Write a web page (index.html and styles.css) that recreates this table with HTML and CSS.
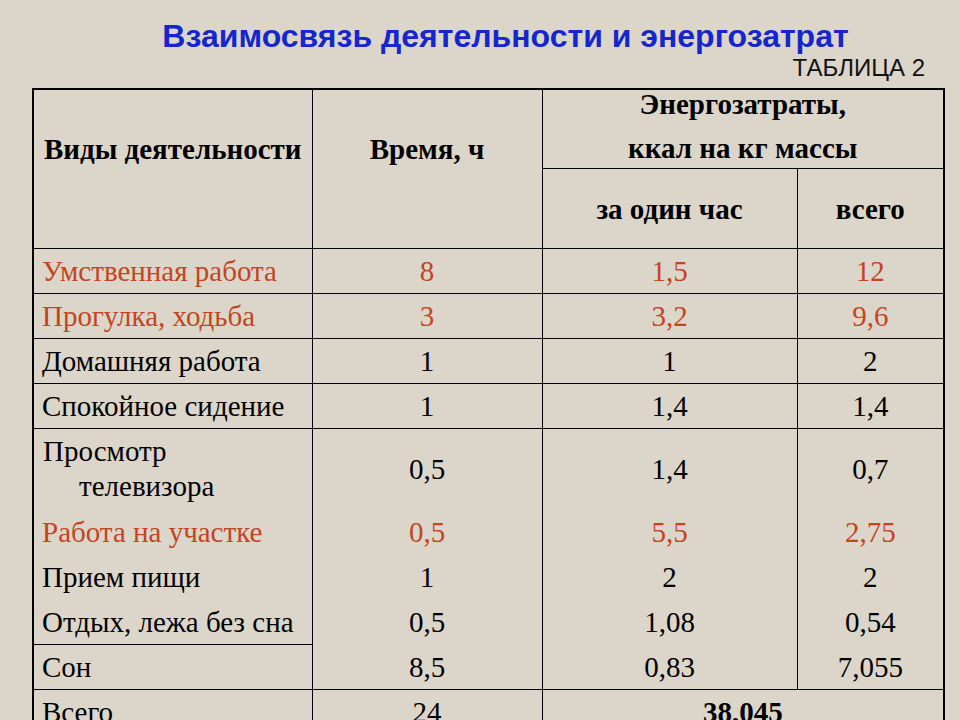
FILE: index.html
```html
<!DOCTYPE html>
<html lang="ru">
<head>
<meta charset="utf-8">
<title>Взаимосвязь деятельности и энергозатрат</title>
<link rel="stylesheet" href="styles.css">
</head>
<body>
<div class="page">
  <h1 class="title">Взаимосвязь деятельности и энергозатрат</h1>
  <div class="caption">ТАБЛИЦА 2</div>
  <table class="grid">
    <colgroup>
      <col class="c1"><col class="c2"><col class="c3"><col class="c4">
    </colgroup>
    <tr class="h1">
      <th rowspan="2" class="side">Виды деятельности</th>
      <th rowspan="2" class="side">Время, ч</th>
      <th colspan="2" class="energy"><div class="energy-in">Энергозатраты,<br>ккал на кг массы</div></th>
    </tr>
    <tr class="h2">
      <th>за один час</th>
      <th>всего</th>
    </tr>
    <tr class="row red">
      <td class="name">Умственная работа</td><td>8</td><td>1,5</td><td>12</td>
    </tr>
    <tr class="row red">
      <td class="name">Прогулка, ходьба</td><td>3</td><td>3,2</td><td>9,6</td>
    </tr>
    <tr class="row">
      <td class="name">Домашняя работа</td><td>1</td><td>1</td><td>2</td>
    </tr>
    <tr class="row">
      <td class="name">Спокойное сидение</td><td>1</td><td>1,4</td><td>1,4</td>
    </tr>
    <tr class="row flow tall">
      <td class="name hang">Просмотр<br>телевизора</td><td>0,5</td><td>1,4</td><td>0,7</td>
    </tr>
    <tr class="row flow red">
      <td class="name">Работа на участке</td><td>0,5</td><td>5,5</td><td>2,75</td>
    </tr>
    <tr class="row flow">
      <td class="name">Прием пищи</td><td>1</td><td>2</td><td>2</td>
    </tr>
    <tr class="row flow rest">
      <td class="name">Отдых, лежа без сна</td><td>0,5</td><td>1,08</td><td>0,54</td>
    </tr>
    <tr class="row flow sleep">
      <td class="name">Сон</td><td>8,5</td><td>0,83</td><td>7,055</td>
    </tr>
    <tr class="row total">
      <td class="name">Всего</td><td>24</td><td colspan="2" class="sum">38,045</td>
    </tr>
  </table>
</div>
</body>
</html>
```
FILE: styles.css
```css
html, body {
  margin: 0;
  padding: 0;
}
body {
  background: #dcd5c9;
  width: 960px;
  height: 720px;
  overflow: hidden;
}
.page {
  padding-top: 16px;
}
.title {
  margin: 0;
  padding-left: 51px;
  text-align: center;
  font-family: "Liberation Sans", Arial, sans-serif;
  font-weight: bold;
  font-size: 32px;
  line-height: 40px;
  color: #1426cf;
  white-space: nowrap;
}
.caption {
  text-align: right;
  padding-right: 35px;
  font-family: "Liberation Sans", Arial, sans-serif;
  font-size: 24px;
  line-height: 24px;
  height: 32px;
  color: #111;
}
.grid {
  margin-left: 32px;
  width: 911px;
  border-collapse: collapse;
  table-layout: fixed;
  border: 2px solid #000;
  font-family: "Liberation Serif", "Times New Roman", serif;
  font-size: 29px;
  color: #000;
}
.c1 { width: 279px; }
.c2 { width: 230px; }
.c3 { width: 255px; }
.c4 { width: 147px; }
.grid th, .grid td {
  border: 1px solid #000;
  padding: 0;
  text-align: center;
  white-space: nowrap;
}
.grid th {
  font-weight: bold;
}
.h1 th.side {
  vertical-align: top;
  padding-top: 39px;
  line-height: 40px;
}
.h1 th.energy {
  height: 78px;
  line-height: 44px;
  vertical-align: top;
}
.energy-in {
  margin: -8px 0;
}
.h2 th {
  height: 79px;
  line-height: 40px;
  vertical-align: middle;
}
.row td {
  height: 44px;
  line-height: 44px;
  vertical-align: middle;
}
.row td.name {
  text-align: left;
  padding-left: 8px;
}
.red td {
  color: #c2451f;
}
.flow td {
  border-top: none;
  border-bottom: none;
  height: 45px;
  line-height: 45px;
}
.flow.rest td,
.flow.sleep td {
  height: 44px;
  line-height: 44px;
}
.tall td {
  height: 81px;
  border-top: 1px solid #000;
}
.tall td.hang {
  line-height: 35px;
  padding: 5px 0 6px 45px;
  text-indent: -36px;
  height: 70px;
}
.sleep td.name {
  border-top: 1px solid #000;
}
.total td {
  border-top: 1px solid #000;
}
.total td.sum {
  font-weight: bold;
}
```
